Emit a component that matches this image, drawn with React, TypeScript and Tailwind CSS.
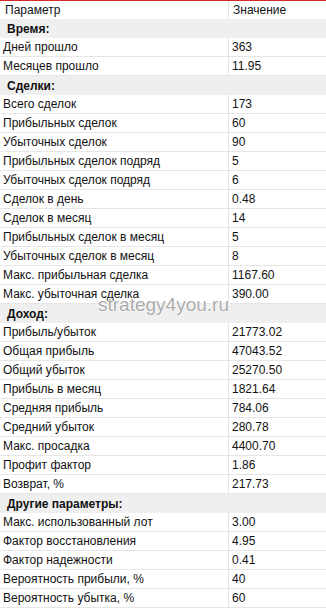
import React from "react";

type Row = { label: string; value?: string; section?: boolean };

const rows: Row[] = [
  { label: "Время:", section: true },
  { label: "Дней прошло", value: "363" },
  { label: "Месяцев прошло", value: "11.95" },
  { label: "Сделки:", section: true },
  { label: "Всего сделок", value: "173" },
  { label: "Прибыльных сделок", value: "60" },
  { label: "Убыточных сделок", value: "90" },
  { label: "Прибыльных сделок подряд", value: "5" },
  { label: "Убыточных сделок подряд", value: "6" },
  { label: "Сделок в день", value: "0.48" },
  { label: "Сделок в месяц", value: "14" },
  { label: "Прибыльных сделок в месяц", value: "5" },
  { label: "Убыточных сделок в месяц", value: "8" },
  { label: "Макс. прибыльная сделка", value: "1167.60" },
  { label: "Макс. убыточная сделка", value: "390.00" },
  { label: "Доход:", section: true },
  { label: "Прибыль/убыток", value: "21773.02" },
  { label: "Общая прибыль", value: "47043.52" },
  { label: "Общий убыток", value: "25270.50" },
  { label: "Прибыль в месяц", value: "1821.64" },
  { label: "Средняя прибыль", value: "784.06" },
  { label: "Средний убыток", value: "280.78" },
  { label: "Макс. просадка", value: "4400.70" },
  { label: "Профит фактор", value: "1.86" },
  { label: "Возврат, %", value: "217.73" },
  { label: "Другие параметры:", section: true },
  { label: "Макс. использованный лот", value: "3.00" },
  { label: "Фактор восстановления", value: "4.95" },
  { label: "Фактор надежности", value: "0.41" },
  { label: "Вероятность прибыли, %", value: "40" },
  { label: "Вероятность убытка, %", value: "60" },
];

export default function App() {
  return (
    <div className="relative w-[326px] h-[611px] bg-white text-[12px] leading-none text-[#111] font-['Liberation_Sans',Arial,sans-serif] overflow-hidden">
      <div className="h-px bg-[#d42a2a]" />
      <div className="flex h-[18px] items-center">
        <div className="w-[228px] pl-[5px]">Параметр</div>
        <div className="w-px self-stretch bg-[#e6e6e6]" />
        <div className="pl-[4px]">Значение</div>
      </div>
      {rows.map((r) =>
        r.section ? (
          <div key={r.label} className="flex h-[19px] items-center bg-[#efefef] pl-[7px] font-bold">
            {r.label}
          </div>
        ) : (
          <div key={r.label} className="flex h-[19px] items-center border-b border-[#e6e6e6]">
            <div className="w-[228px] pl-[3px]">{r.label}</div>
            <div className="w-px self-stretch bg-[#e6e6e6]" />
            <div className="pl-[3px]">{r.value}</div>
          </div>
        )
      )}
      {/* watermark */}
      <div className="absolute left-[98px] top-[295px] text-[19px] leading-none text-[#9c9c9c]/85 [text-shadow:0_0_2px_#fff,0_0_2px_#fff]">
        strategy4you.ru
      </div>
    </div>
  );
}
